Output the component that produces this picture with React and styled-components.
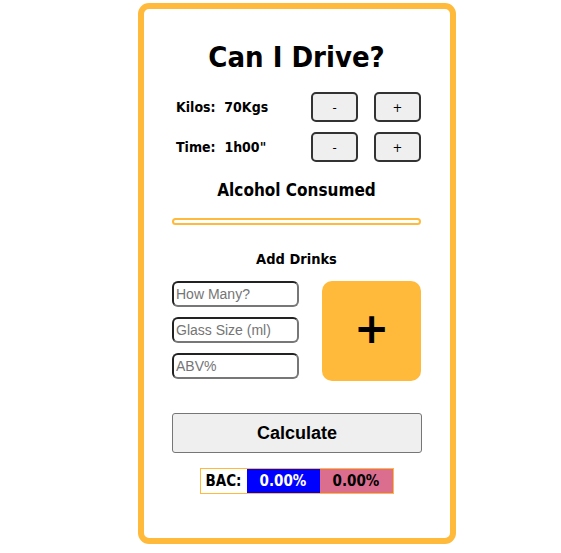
import React from "react";
import styled, { createGlobalStyle } from "styled-components";

const Global = createGlobalStyle`
  html, body { margin: 0; padding: 0; background: #fff; }
  body { font-family: "DejaVu Sans Condensed", "DejaVu Sans", sans-serif; color: #000; }
`;

const Page = styled.div`
  display: flex;
  padding: 3px 0 0 138px;
`;

const Card = styled.div`
  box-sizing: border-box;
  width: 318px;
  height: 541px;
  border: 6px solid #ffba3b;
  border-radius: 11px;
  padding: 30px 29px 0 28px;
  display: flex;
  flex-direction: column;
`;

const Title = styled.h1`
  margin: 0;
  text-align: center;
  font-size: 29px;
  font-weight: bold;
  line-height: 36px;
`;

const Rows = styled.div`
  margin-top: 17px;
  display: flex;
  flex-direction: column;
  gap: 10px;
`;

const Row = styled.div`
  display: flex;
  align-items: center;
  height: 30px;
`;

const Label = styled.span`
  flex: 1;
  padding-left: 4px;
  font-size: 14px;
  font-weight: bold;
  white-space: pre;
`;

const StepButton = styled.button`
  box-sizing: border-box;
  width: 47px;
  height: 30px;
  margin-left: ${(p) => p.$gap || 0}px;
  border: 2px solid #333;
  border-radius: 5px;
  background: #efefef;
  font-family: "DejaVu Sans Condensed", "DejaVu Sans", sans-serif;
  font-size: 13px;
  color: #000;
  padding: 0;
`;

const Subtitle = styled.h3`
  margin: 18px 0 0;
  text-align: center;
  font-size: 17px;
  font-weight: bold;
  line-height: 20px;
`;

const Progress = styled.div`
  box-sizing: border-box;
  margin-top: 18px;
  height: 7px;
  border: 2px solid #ffba3b;
  border-radius: 4px;
`;

const SectionTitle = styled.h4`
  margin: 25px 0 0;
  text-align: center;
  font-size: 14.5px;
  font-weight: bold;
  line-height: 18px;
`;

const DrinkArea = styled.div`
  margin-top: 13px;
  display: flex;
  justify-content: space-between;
`;

const Inputs = styled.div`
  display: flex;
  flex-direction: column;
  gap: 10px;
`;

const Input = styled.input`
  box-sizing: border-box;
  width: 127px;
  height: 26px;
  border: 2px solid #222;
  border-bottom-color: #777;
  border-right-color: #777;
  border-radius: 6px;
  padding: 0 2px;
  font-family: "Liberation Sans", Arial, sans-serif;
  font-size: 14px;
  outline: none;
  &::placeholder { color: #757575; }
`;

const AddButton = styled.button`
  width: 99px;
  height: 100px;
  border: none;
  border-radius: 10px;
  background: #ffba3b;
  color: #000;
  font-family: "DejaVu Sans", sans-serif;
  font-weight: bold;
  font-size: 42px;
  line-height: 1;
  padding: 0 0 4px;
  display: flex;
  align-items: center;
  justify-content: center;
`;

const CalcButton = styled.button`
  margin-top: 32px;
  box-sizing: border-box;
  width: 250px;
  height: 40px;
  border: 1px solid #767676;
  border-radius: 3px;
  background: #efefef;
  font-family: "Liberation Sans", Arial, sans-serif;
  font-weight: bold;
  font-size: 18px;
  color: #000;
`;

const BacBox = styled.div`
  margin: 15px auto 0;
  display: flex;
  border: 1px solid #ffba3b;
  height: 26px;
  box-sizing: border-box;
`;

const BacCell = styled.div`
  width: ${(p) => p.$w}px;
  background: ${(p) => p.$bg};
  color: ${(p) => p.$fg};
  display: flex;
  align-items: center;
  justify-content: center;
  font-size: 15px;
  font-weight: bold;
`;

export default function App() {
  return (
    <>
      <Global />
      <Page>
        <Card>
          <Title>Can I Drive?</Title>
          <Rows>
            <Row>
              <Label>{"Kilos:  70Kgs"}</Label>
              <StepButton>-</StepButton>
              <StepButton $gap={16}>+</StepButton>
            </Row>
            <Row>
              <Label>{"Time:  1h00\""}</Label>
              <StepButton>-</StepButton>
              <StepButton $gap={16}>+</StepButton>
            </Row>
          </Rows>
          <Subtitle>Alcohol Consumed</Subtitle>
          <Progress />
          <SectionTitle>Add Drinks</SectionTitle>
          <DrinkArea>
            <Inputs>
              <Input placeholder="How Many?" />
              <Input placeholder="Glass Size (ml)" />
              <Input placeholder="ABV%" />
            </Inputs>
            <AddButton>+</AddButton>
          </DrinkArea>
          <CalcButton>Calculate</CalcButton>
          <BacBox>
            <BacCell $w={46} $bg="#fff" $fg="#000">BAC:</BacCell>
            <BacCell $w={73} $bg="#0000ff" $fg="#fff">0.00%</BacCell>
            <BacCell $w={73} $bg="#db6e8f" $fg="#000">0.00%</BacCell>
          </BacBox>
        </Card>
      </Page>
    </>
  );
}
